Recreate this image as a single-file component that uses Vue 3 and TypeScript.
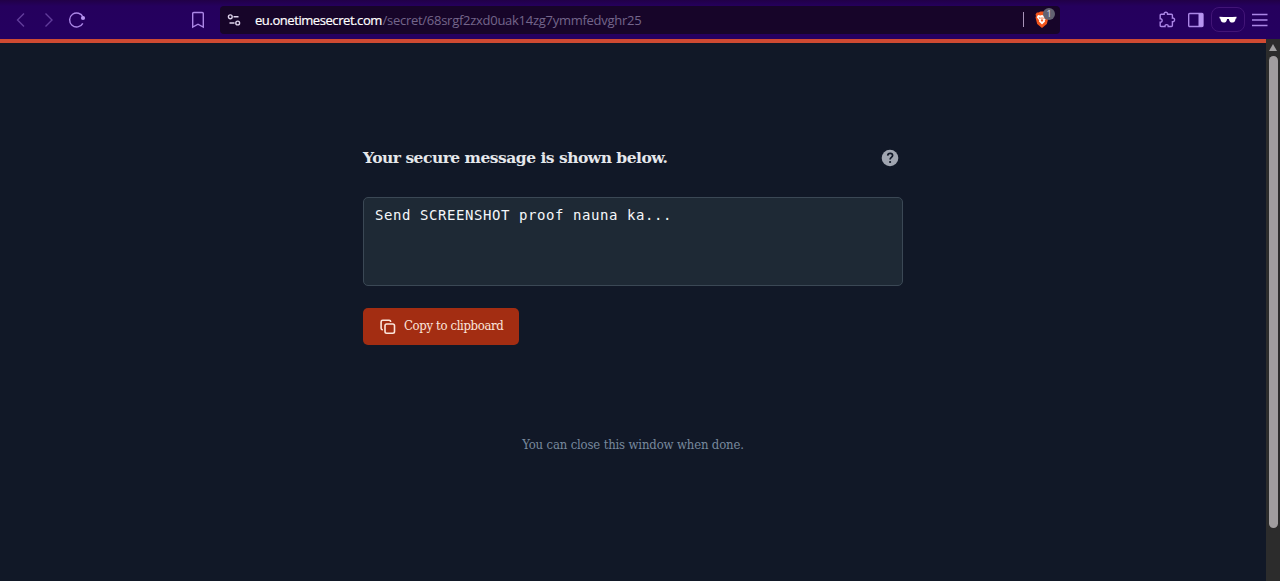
<script setup lang="ts">
const host = 'eu.onetimesecret.com'
const path = '/secret/68srgf2zxd0uak14zg7ymmfedvghr25'
const secret = 'Send SCREENSHOT proof nauna ka...'
</script>

<template>
  <div class="window">
    <header class="toolbar">
      <nav class="nav">
        <svg class="dim" width="28" height="20" viewBox="0 0 28 20"><path d="M17 3.500 10.500 10l6.500 6.500" /></svg>
        <svg class="dim" width="28" height="20" viewBox="0 0 28 20"><path d="m10.500 3.500 6.500 6.500-6.500 6.500" /></svg>
        <svg width="28" height="20" viewBox="0 0 28 20">
          <path d="M19.800 13.300a7 7 0 1 1 .3-6" /><circle class="solid" cx="20" cy="8" r="2.100" />
        </svg>
      </nav>
      <svg class="bookmark" width="14" height="18" viewBox="0 0 14 18"><path d="M1.700 2.600Q1.700 1.500 2.800 1.500h8.400q1.100 0 1.100 1.100v13.500L7 13.200l-5.300 2.900Z" /></svg>
      <div class="address">
        <svg class="tune" width="14" height="14" viewBox="0 0 14 14">
          <circle cx="3.300" cy="3.800" r="1.900" /><path d="M6.500 3.800h5M2.500 10h5" /><circle cx="10.700" cy="10" r="1.900" />
        </svg>
        <span class="url"><span class="host">{{ host }}</span><span class="path">{{ path }}</span></span>
        <i class="divider"></i>
        <div class="shield">
          <svg width="16" height="18" viewBox="0 0 16 18">
            <path fill="#f2541b" d="m4.500 1.500 2-.9h3l2 .9h1.600l1.400 2-.5 1.600.5 1.500-1.700 6.400L8 17l-4.800-4L1.500 6.600 2 5.100l-.5-1.600 1.400-2Z" />
            <path fill="#fff" d="m4 4 2.300.5L8 4l1.700.5L12 4l1.200 2.300-2.400 3 .2 1.200L8 13.500l-3-3 .2-1.200-2.400-3Z" />
            <path fill="#f2541b" d="m4.600 6.200 2.100.5-.6 1.500ZM11.400 6.200l-2.100.5.6 1.500ZM7.700 6h.6l.3 3 .8.8L8 10.700l-1.400-.9.800-.8Z" />
          </svg>
          <b>1</b>
        </div>
      </div>
      <div class="actions">
        <svg width="18" height="18" viewBox="0 0 18 18">
          <path d="M3.200 3.200h2.900c-.4-2.600 3.900-2.600 3.500 0h3.800q1 0 1 1v2.900c2.900-.5 2.900 4 0 3.600v3.800q0 1-1 1h-3.200c.3-2.500-3.500-2.500-3.200 0H3.200q-1 0-1-1v-3.200c2.600.3 2.600-3.900 0-3.600V4.200q0-1 1-1Z" />
        </svg>
        <svg width="18" height="18" viewBox="0 0 18 18">
          <rect x="1.700" y="2.500" width="14.300" height="13" rx="1" /><path class="solid" d="M11.500 2.500h4.500v13h-4.500Z" />
        </svg>
        <div class="private">
          <svg width="18" height="8" viewBox="0 0 18 8"><path d="M.5.700q8.500.6 17 0v1.500l-.9.500q-.3 3.600-3 3.800-3.200.2-3.700-3.600H8.100Q7.600 6.700 4.400 6.500 1.700 6.300 1.400 2.700L.5 2.200Z" /></svg>
        </div>
        <svg class="menu" width="18" height="18" viewBox="0 0 18 18"><path d="M1 3.500h15.500M1 9h15.500M1 14.500h15.500" /></svg>
      </div>
    </header>

    <div class="viewport">
      <main class="page">
        <section class="content">
          <div class="heading">
            <h1>Your secure message is shown below.</h1>
            <svg width="20" height="20" viewBox="0 0 20 20">
              <circle cx="10" cy="10" r="8.300" fill="#a0a5b0" />
              <path d="M7.700 7.600c.2-3 4.900-2.900 4.900-.1 0 1.900-2.500 1.800-2.500 3.900" fill="none" stroke="#111827" stroke-width="1.700" />
              <circle cx="10.100" cy="14" r="1.100" fill="#111827" />
            </svg>
          </div>
          <div class="secret">{{ secret }}</div>
          <button type="button" class="copy">
            <svg width="18" height="18" viewBox="0 0 18 18">
              <rect x="6" y="6" width="9.500" height="9.200" rx="1.700" />
              <path d="M3.900 11.800h-.2q-1.600 0-1.600-1.600V3.900q0-1.600 1.600-1.600h6.400q1.600 0 1.600 1.600v.2" />
            </svg>
            <span>Copy to clipboard</span>
          </button>
          <p class="done"><span>You can close this window when done.</span></p>
        </section>
      </main>
      <div class="scrollbar"><i class="arrow"></i><i class="thumb"></i></div>
    </div>
  </div>
</template>

<style>
body { background: #111827; overflow: hidden; }
</style>

<style scoped>
* { box-sizing: border-box; }
.window { width: 1280px; height: 581px; display: flex; flex-direction: column; }
svg { display: block; flex: none; }
.toolbar { height: 39px; flex: none; display: flex; align-items: center; background: linear-gradient(#210047 0, #25005d 6px, #250060 100%); }
.toolbar svg { fill: none; stroke: #ab86e6; stroke-width: 1.4; }
.toolbar .solid { fill: #b795f0; stroke: none; }
.nav { display: flex; margin-left: 7px; width: 184px; }
.nav .dim { opacity: .45; }
.address { margin-left: 15px; width: 840px; height: 28px; border-radius: 4px; background: #170529; display: flex; align-items: center; padding-left: 7px; }
.toolbar .tune { stroke: #ded3ec; stroke-width: 1.4; }
.url { margin-left: 14px; width: 768px; font: 13px/20px "Open Sans", "Noto Sans", sans-serif; white-space: nowrap; }
.host { color: #fff; display: inline-block; width: 127.500px; letter-spacing: -.43px; -webkit-text-stroke: .2px #fff; }
.path { color: #74658b; letter-spacing: -.27px; }
.divider { width: 1px; height: 15px; background: #a894b9; }
.shield { position: relative; margin-left: 10px; }
.shield svg { stroke: none; }
.shield b { position: absolute; left: 9px; top: -3px; width: 12px; height: 12px; border-radius: 50%; background: #636271; color: #dedee5; font: 9px/12px "Open Sans", sans-serif; text-align: center; }
.actions { display: flex; align-items: center; margin-left: 98px; }
.actions > svg + svg { margin-left: 11px; }
.private { width: 34px; height: 25px; margin: 0 6px; border: 1px solid #421577; border-radius: 8px; display: flex; align-items: center; justify-content: center; }
.toolbar .private svg { fill: #fff; stroke: none; }
.viewport { display: flex; flex: 1; }
.page { flex: 1; border-top: 4px solid #cf4a32; background: #111827; }
.content { width: 540px; margin: 105px auto 0; }
.heading { display: flex; justify-content: space-between; align-items: center; height: 20px; padding-right: 3px; }
h1 { margin: 0; font: bold 15.500px/20px "DejaVu Serif", serif; letter-spacing: -.5px; color: #e5e7eb; white-space: nowrap; }
.secret { height: 89px; margin-top: 29px; border: 1px solid #3b4855; border-radius: 5px; background: #1e2935; padding: 7px 11px; font: 14px/20px "DejaVu Sans Mono", monospace; letter-spacing: .57px; color: #f5f7fa; }
.copy { display: flex; align-items: center; width: 156px; height: 37px; margin-top: 22px; padding: 0 0 0 16px; border: 0; border-radius: 5px; background: #a32d12; color: #fbe5dc; font: 13px/20px "DejaVu Serif Condensed", "DejaVu Serif", serif; letter-spacing: -.35px; white-space: nowrap; }
.copy span { padding-bottom: 1px; }
.copy svg { fill: none; stroke: #fbe5dc; stroke-width: 1.6; margin-right: 7px; }
.done { margin: 90px 0 0; text-align: center; font: 13px/20px "DejaVu Serif Condensed", "DejaVu Serif", serif; letter-spacing: -.16px; color: #78899d; }
.scrollbar { width: 14px; background: #2c2c2c; display: flex; flex-direction: column; align-items: center; }
.arrow { margin-top: 5px; border: 4.500px solid transparent; border-top: 0; border-bottom: 7px solid #a09fa0; }
.thumb { width: 9px; height: 472px; margin-top: 5px; border-radius: 5px; background: #a09d9f; }
</style>
